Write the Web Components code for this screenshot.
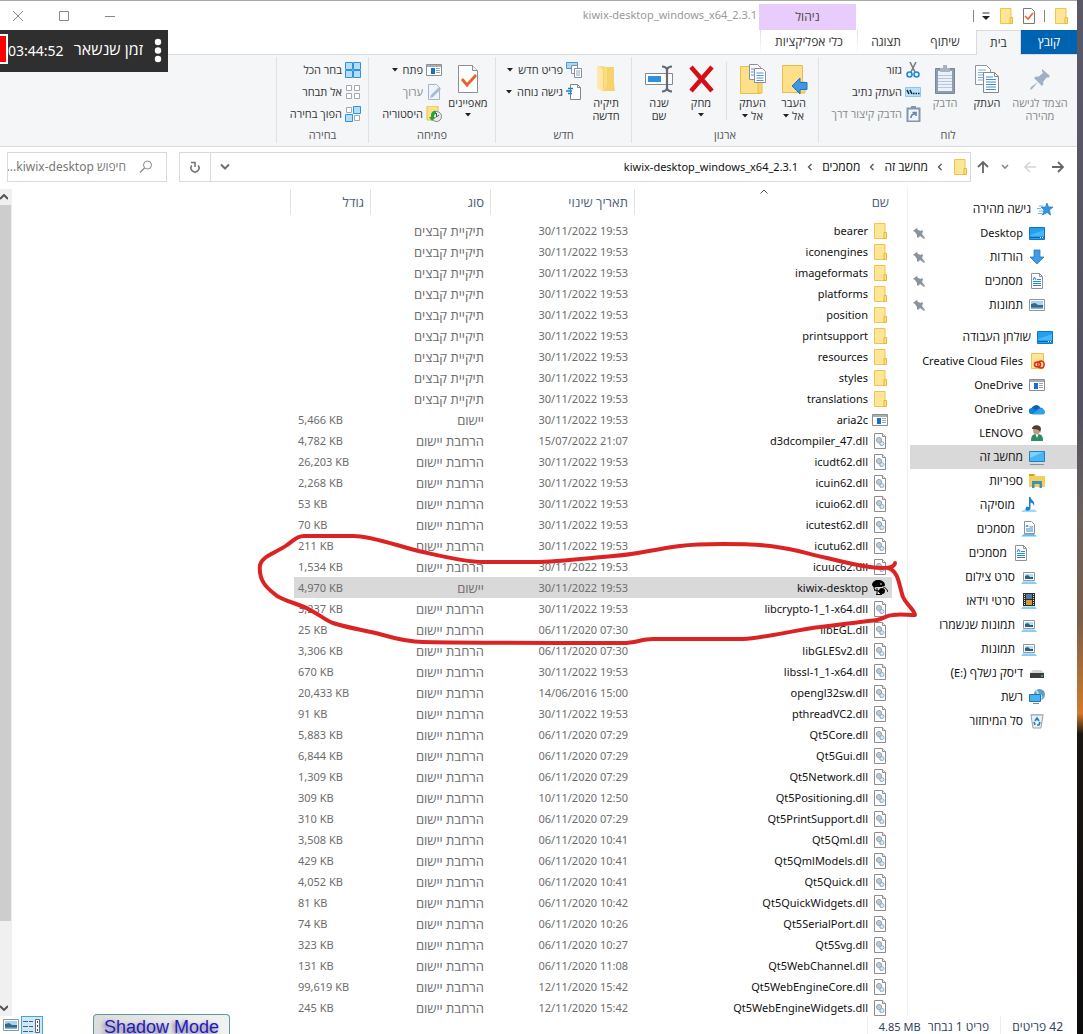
<!DOCTYPE html>
<html lang="he" dir="rtl">
<head>
<meta charset="utf-8">
<title>kiwix-desktop_windows_x64_2.3.1</title>
<style>
html,body{margin:0;height:100%}
body{font:11px/16px "Noto Sans","Open Sans","Liberation Sans",sans-serif;color:#111;background:#fff;overflow:hidden}
</style>
</head>
<body>
<explorer-window></explorer-window>
<script>
const ICONS = {
folder:[16,16,'<path d="M2.500.5h10.500v15H2.500z" fill="#ffe596" stroke="#ecc54e"/><path d="M12 9.500h2.500v6H12z" fill="#ffdf80" stroke="#e3b83c"/>'],
app:[16,14,'<path d="M.5 1.500h15v11H.5z" fill="#fff" stroke="#8b8f94"/><path d="M1 2h14v2H1z" fill="#a9adb2"/><path d="M5 5h4v6H5z" fill="#1272c8"/><path d="M10 5.500h4M10 7.500h4M10 9.500h4" stroke="#9aa3ad"/>'],
dll:[16,16,'<path d="M2.500.5h8l3 3v12h-11z" fill="#fff" stroke="#8d8d8d"/><path d="M10.500.5v3h3" fill="#eee" stroke="#8d8d8d"/><circle cx="7" cy="7" r="2.500" fill="#d8e2e9" stroke="#8797a4"/><circle cx="7" cy="7" r="1" fill="#fff" stroke="#8797a4" stroke-width=".6"/><circle cx="10" cy="10.500" r="2" fill="#dbeaf3" stroke="#96b2c6"/><path d="M6 9l3 4" stroke="#9fb7c8"/>'],
kiwix:[16,16,'<path d="M0 5C0 2 3 0 6 0c4 0 7 2 7 5 0 1-1 1-2 1l-1 1H4L2 8z" fill="#000"/><circle cx="10" cy="11" r="3" fill="#000"/><path d="M2 8l1 3M3 10l4 1M5 8v6M4 14.500h4M6 11l4 3.500H7" stroke="#000" fill="none"/><path d="M11 7c2 0 4 2 5 5" stroke="#000" fill="none"/><circle cx="9" cy="4" r=".8" fill="#fff"/>'],
star:[16,16,'<path d="M10 2l1.500 4H16l-3.500 3 1 5L10 11.500 5.500 14 7 9 4 6h4.500z" fill="#2e96e6" stroke="#1c78c4" stroke-width=".7"/><path d="M2 5h4M0 7.500h4M2 10h4M1 12.500h4" stroke="#6db9ef"/>'],
desktop:[16,13,'<path d="M.5.5h15v12H.5z" fill="#23a0f0" stroke="#1474c0"/><path d="M1 8L15 3v6H1z" fill="#45b8fa"/><path d="M1 10.500h14" stroke="#1167a8"/><path d="M11 10.500h1m1 0h1" stroke="#fff"/>'],
down:[16,16,'<path d="M5 1h6v7h4l-7 7-7-7h4z" fill="#3f9be8" stroke="#2777bd" stroke-width=".8"/>'],
doc:[16,16,'<path d="M2.500.5h8l3 3v12h-11z" fill="#fff" stroke="#8c9299"/><path d="M10.500.5v3h3" fill="none" stroke="#8c9299"/><path d="M4 7l1.500-3L7 7M4 10.500h8M4 12.500h8M8 6.500h4M4 8.500h8" stroke="#2e8ad0" fill="none"/>'],
image:[16,12,'<path d="M.5.5h15v11H.5z" fill="#fff" stroke="#8f979e"/><path d="M2 2h12v8H2z" fill="#a9d4f1"/><path d="M2 5l4-1 3 2 5 0v4H2z" fill="#34698c"/><path d="M2 8.500h12V10H2z" fill="#7db7dc"/>'],
cc:[16,16,'<path d="M2.500.5h12v15h-12z" fill="#ffe596" stroke="#ecc54e"/><ellipse cx="8.500" cy="11.500" rx="3" ry="2.500" fill="none" stroke="#e0261b" stroke-width="1.500"/><ellipse cx="12" cy="11.500" rx="3.200" ry="3.500" fill="none" stroke="#e0261b" stroke-width="1.500"/>'],
cloud:[16,11,'<path d="M3 10a3 3 0 0 1-.5-6A5 5 0 0 1 11 3.500 3.500 3.500 0 0 1 13 10z" fill="#1681d2"/><path d="M3 10.500L10 5a4 4 0 0 1 6 3c0 2-1 2.500-3 2.500z" fill="#2fa3ec"/><path d="M5 2a4 4 0 0 1 6 1.500L7 6 3 4z" fill="#0f5fae"/>'],
user:[16,16,'<path d="M2 16c0-6 2-7 6-7s6 1 6 7z" fill="#2f8b62"/><path d="M6 8h4l-2 5z" fill="#fff"/><ellipse cx="7.500" cy="5" rx="3.500" ry="4.500" fill="#c69a7c"/><path d="M3 4c0-5 9-5 9 0l-1 4c0-3-2-4-7-4z" fill="#4b3c35"/>'],
pc:[16,15,'<path d="M.5 1.500h15v10H.5z" fill="#48b5f7" stroke="#2680bb"/><path d="M1 8l13-6H1z" fill="#7fd0ff"/><path d="M1 14.500h14" stroke="#7894a8"/>'],
libs:[16,14,'<path d="M0 2l1-2h5l1 2h9v11H0z" fill="#f6cf5b"/><path d="M0 0h5v2H0z" fill="#caa02d"/><path d="M3 7h10v7h-2.500v-4h-5v4H3z" fill="#3a92bd"/>'],
music:[16,16,'<path d="M3 12.500h11l2 2.500H0z" fill="#a6d8f5"/><path d="M8 0h1.500c0 3 5 4 3.500 8.500-1-2-2-3-3.500-3V11c0 3.500-5 3.500-5 1s2-2.500 3.500-2z" fill="#1681d2"/>'],
docpc:[16,16,'<path d="M3.500.5h7l3 3v9h-10z" fill="#fff" stroke="#8c9299"/><path d="M5 6l1-2 1 2M5 8h7M5 10h7M8.500 6H12" stroke="#2e8ad0" fill="none"/><path d="M3 13h10l3 2.500H0z" fill="#6bbbe9"/>'],
imgpc:[16,14,'<path d="M2.500 2.500h11v8h-11z" fill="#fff" stroke="#8f979e"/><path d="M4 4h8v5H4z" fill="#b9def4"/><path d="M4 6l3-1 2 2h3v2H4z" fill="#28628a"/><path d="M2 11.500h12l2 2.500H0z" fill="#8accef"/>'],
film:[16,16,'<path d="M2 0h12v13H2z" fill="#2b2b2b"/><path d="M5 1h6v5H5z" fill="#5577a8"/><path d="M5 7h6v5H5z" fill="#d29a35"/><path d="M3.500 1v12M12.500 1v12" stroke="#ddd" stroke-dasharray="1 1"/><path d="M2 13.500h12l2 2.500H0z" fill="#8accef"/>'],
drive:[16,12,'<path d="M4 3h8l3 3H1z" fill="#d4d4d4"/><path d="M1 6h14v5H1z" fill="#3a3d3f"/><path d="M12 9h2" stroke="#5ff08a"/>'],
net:[16,16,'<circle cx="10.500" cy="5.500" r="5.500" fill="#5a9fc7"/><path d="M7 2c3 1 1 4 3 4s3 1 2 4" stroke="#bde0ef" fill="none" stroke-width="2"/><path d="M.5 5.500h11v7H.5z" fill="#44b2f4" stroke="#2574a8"/><path d="M4 14.500h6" stroke="#6d8ca0"/>'],
bin:[16,16,'<path d="M2 2h12l-2 13H4z" fill="#eef1f3" stroke="#9aa2a8"/><path d="M1.500 1.500h13" stroke="#aeb5ba"/><path d="M6 8l2-3 2 3M11 9l-1 3H8M5 9l1 3" stroke="#1f7fc9" stroke-width="1.700" fill="none"/>'],
navpin:[12,12,'<path d="M1 3l3-2 1 2 3 1 1-1 1 1-1 3 3 4-1 1-4-3-2 2-1-1 0-2-2-3-2-1z" fill="#8b949c"/>'],
bigpin:[22,22,'<path d="M13 1l8 7-2 2-1-1-4 5c1 2 0 3-1 4l-4-4-6 7-2 1 1-3 7-5-4-4c1-1 3-2 4-1l5-4-1-2z" fill="#9fb0c6"/>'],
copy:[26,30,'<path d="M1.500 1.500h11l4 4v15h-15z" fill="#fff" stroke="#8c96a2"/><path d="M4 6h8M4 8.500h10M4 11h10M4 13.500h10M4 16h10" stroke="#73aee0"/><path d="M9.500 8.500h11l4 4v16h-15z" fill="#fff" stroke="#7f8994"/><path d="M20.500 8.500v4h4" fill="none" stroke="#7f8994"/><path d="M12 13h7M12 15.500h10M12 18h10M12 20.500h10M12 23h10M12 25.500h10" stroke="#3f8ad4"/>'],
paste:[22,30,'<path d="M1.500 4.500h19v25h-19z" fill="#8e9db1" stroke="#75869d"/><path d="M4 7h14v20H4z" fill="#eaf1fa"/><path d="M4 11.500h14M4 14.500h14M4 17.500h14M4 20.500h14M4 23.500h14" stroke="#b7c6d9"/><path d="M6 4h3V1h4v3h3v4H6z" fill="#a8b3c0"/>'],
moveto:[28,30,'<path d="M2.500 1.500h20v27h-20z" fill="#ffe08a" stroke="#e6be4e"/><path d="M20 18h5v11h-5z" fill="#ffd56b" stroke="#e6be4e"/><path d="M27 18.500h-7V14l-8 8 8 8v-4.500h7z" fill="#3e97e6" stroke="#2472b8"/>'],
copyto:[28,30,'<path d="M1.500 2.500h20v27h-20z" fill="#ffe08a" stroke="#e6be4e"/><path d="M19 18h4v11h-4z" fill="#ffd56b" stroke="#e6be4e"/><path d="M10.500.5h8l3 3v12h-11z" fill="#fff" stroke="#8790a0"/><path d="M15.500 4.500h8l3 3v11h-11z" fill="#fff" stroke="#8790a0"/><path d="M12 5h3M12 8h3M12 11h3M17.500 9h7M17.500 11.500h7M17.500 14h7M17.500 16.500h7" stroke="#4f96dc"/>'],
del:[26,28,'<path d="M3 2l21 24M24 2L3 26" stroke="#d60f17" stroke-width="4.500"/>'],
rename:[28,28,'<path d="M.5 8.500h27v11H.5z" fill="#fff" stroke="#7f8b96"/><path d="M3 11h13v6H3z" fill="#2f8fe0"/><path d="M17 1.500q4 0 5 3 1-3 5-3M22 3v22M17 26.500q4 0 5-3 1 3 5 3" stroke="#626a72" stroke-width="2.200" fill="none"/>'],
newfolder:[20,28,'<path d="M5 2h13v16l1 8H5z" fill="#f6d36d"/><path d="M1 1h8l2 3v16l-3 7V5z" fill="#f9dc84"/><path d="M1 1l6 4v22l-6-4z" fill="#ffe9a8"/>'],
props:[22,30,'<path d="M1.500 1.500h14l5 5v22h-19z" fill="#fff" stroke="#8b8f94"/><path d="M15.500 1.500v5h5" fill="#eee" stroke="#8b8f94"/><path d="M5 15l5 6 9-10" fill="none" stroke="#e8622c" stroke-width="2.800"/>'],
cut:[16,16,'<path d="M5 0l5 10M11 0L6 10" stroke="#777f87" stroke-width="1.600"/><circle cx="4.500" cy="12.500" r="2.500" fill="none" stroke="#1d89d8" stroke-width="1.600"/><circle cx="11.500" cy="12.500" r="2.500" fill="none" stroke="#1d89d8" stroke-width="1.600"/>'],
path:[16,10,'<path d="M.5.5h15v9H.5z" fill="#b9e0fa" stroke="#90c6ea"/><path d="M2 3l2 4M5 3l2 4" stroke="#123"  stroke-width="1.500"/><path d="M8 6.500h1.500m1 0H12m1 0h1.500" stroke="#123" stroke-width="1.500"/>'],
shortcut:[16,16,'<path d="M2.500 2.500h12v13h-12z" fill="#f3f7fc" stroke="#8496ad" stroke-width="2"/><path d="M6 0h5v3H6z" fill="#8496ad"/><path d="M6 12c0-3 1-4 4-4M7.500 6.500H11V10" fill="none" stroke="#6980a0" stroke-width="1.600"/>'],
newitem:[16,16,'<path d="M.5.5h11v6H.5z" fill="#a8d5f5" stroke="#4e96c8"/><path d="M5.500 3.500h6v8h-6z" fill="#fff" stroke="#8790a0"/><path d="M8.500 6.500h7v9h-7z" fill="#fff" stroke="#8790a0"/><path d="M10 9h4M10 11h4M10 13h4" stroke="#8aa"/>'],
easy:[16,16,'<path d="M4.500.5h7l3 3v12h-10z" fill="#fff" stroke="#7f8790"/><path d="M11.500.5v3h3" fill="none" stroke="#7f8790"/><path d="M2 4.500h5M0 7h6M2 9.500h4" stroke="#1d7fd0" stroke-width="1.500"/>'],
edit:[16,16,'<path d="M2.500.5h8l3 3v12h-11z" fill="#eef4fb" stroke="#a5b6cc"/><path d="M15 5l-8 8-3 1 1-3 8-8z" fill="#a7bad3"/>'],
history:[16,16,'<path d="M1 0h11v14H1z" fill="#fbe18a" stroke="#e5c052"/><circle cx="10.500" cy="10.500" r="5" fill="#e7eaec" stroke="#84898d"/><path d="M10.500 7v4l2.500-2" stroke="#555" fill="none"/><path d="M5 9c0-3 3-5 5-4v3c-2 0-2 2-2 3h2l-4 4-3-4h2z" fill="#25a43a"/>'],
selall:[16,16,'<path d="M.5.5h7v7h-7zM8.500.5h7v7h-7zM.5 8.500h7v7h-7zM8.500 8.500h7v7h-7z" fill="#b4ddfa" stroke="#3391d8"/>'],
selnone:[16,16,'<path d="M1.500 1.500h5v5h-5zM9.500 1.500h5v5h-5zM1.500 9.500h5v5h-5zM9.500 9.500h5v5h-5z" fill="#fff" stroke="#a4a9ae"/>'],
selinv:[16,16,'<path d="M1.500 1.500h5v5h-5zM9.500 9.500h5v5h-5z" fill="#fff" stroke="#a4a9ae"/><path d="M8.500.5h7v7h-7zM.5 8.500h7v7h-7z" fill="#b4ddfa" stroke="#3391d8"/>'],
check:[14,16,'<path d="M1.500.5h8l3 3v12h-11z" fill="#fff" stroke="#777"/><path d="M3 8l3 3 5-6" fill="none" stroke="#e8622c" stroke-width="1.600"/>'],
qat:[8,8,'<path d="M.5 1h7" stroke="#333"/><path d="M0 4h8L4 8z" fill="#222"/>'],
close:[12,12,'<path d="M1 1l10 10M11 1L1 11" stroke="#888"/>'],
max:[12,12,'<path d="M1.500 1.500h9v9h-9z" fill="none" stroke="#888"/>'],
min:[12,12,'<path d="M1 6.500h10" stroke="#888"/>'],
fwd:[14,12,'<path d="M1 6h11M7 1l5 5-5 5" fill="none" stroke="#666" stroke-width="1.800"/>'],
back:[14,12,'<path d="M13 6H2M7 1L2 6l5 5" fill="none" stroke="#d4d4d4" stroke-width="1.500"/>'],
up:[12,14,'<path d="M6 13V2M1 7l5-5 5 5" fill="none" stroke="#666" stroke-width="1.800"/>'],
chev:[8,6,'<path d="M1 1l3 3 3-3" fill="none" stroke="#888" stroke-width="1.600"/>'],
chevbig:[12,8,'<path d="M2 1.500l4 4 4-4" fill="none" stroke="#707070" stroke-width="2"/>'],
crumb:[6,8,'<path d="M4.500 1L1.500 4l3 3" fill="none" stroke="#555" stroke-width="1.300"/>'],
sort:[8,5,'<path d="M.5 4.500L4 1l3.500 3.500" fill="none" stroke="#555"/>'],
refresh:[12,12,'<path d="M2.800 4.500A4 4 0 1 0 9.200 4.500M2 1.500H6V6" fill="none" stroke="#777" stroke-width="1.600"/>'],
search:[14,14,'<circle cx="8.500" cy="5" r="4" fill="none" stroke="#8a8a8a"/><path d="M5.500 8L1 12.500" stroke="#8a8a8a" stroke-width="1.300"/>'],
arrUp:[8,6,'<path d="M0 5l4-4 4 4" fill="none" stroke="#555" stroke-width="2"/>'],
arrDn:[8,6,'<path d="M0 1l4 4 4-4" fill="none" stroke="#555" stroke-width="2"/>'],
details:[18,14,'<path d="M0 2.500h5m1 0h4M0 7.500h5m1 0h4M0 12.500h5m1 0h4" stroke="#4b6070"/><path d="M12.500.5h4v13h-4z" fill="#fff" stroke="#667"/><path d="M14 3h1M14 7h1M14 11h1" stroke="#456" stroke-width="2"/>'],
caret:[6,4,'<path d="M0 0h6L3 3.500z" fill="#222"/>'],
dots:[8,26,'<g fill="#fff"><circle cx="4" cy="4" r="3.200"/><circle cx="4" cy="12.500" r="3.200"/><circle cx="4" cy="21" r="3.200"/></g>']
};

const define = (tag, css, html, setup) => {
  const tpl = document.createElement('template');
  tpl.innerHTML = `<style>*{box-sizing:border-box}button{font:inherit;color:inherit;background:none;border:0;padding:0;margin:0}a{color:inherit;text-decoration:none}${css}</style>${html}`;
  customElements.define(tag, class extends HTMLElement {
    connectedCallback() {
      if (this.shadowRoot) return;
      const root = this.attachShadow({ mode: 'open' });
      root.append(tpl.content.cloneNode(true));
      if (setup) setup(this, root);
    }
  });
};
const icon = n => `<ui-icon name="${n}"></ui-icon>`;

define('ui-icon', ':host{display:inline-flex;flex:none}svg{display:block}', '', (el, root) => {
  const [w, h, body] = ICONS[el.getAttribute('name')];
  root.innerHTML += `<svg width="${w}" height="${h}" viewBox="0 0 ${w} ${h}" aria-hidden="true">${body}</svg>`;
});

define('title-bar', `
:host{display:flex;height:30px;flex:none;border-top:1px solid #a8a8a8;background:#fff}
.quick{display:flex;align-items:center;gap:8px;padding-right:8px;width:221px;flex:none}
.quick i{width:1px;height:12px;background:#888}
.ctx{width:97px;margin-top:3px;background:#e8ccfb;display:flex;align-items:center;justify-content:center;font-size:12px;color:#444}
.title{color:#999;padding:6px 2px 0;direction:ltr}
.controls{margin-right:auto;display:flex;direction:ltr}
.controls button{width:46px;display:flex;align-items:center;padding-left:12px}
`, `<div class="quick">${icon('folder')}<i></i>${icon('check')}${icon('folder')}${icon('qat')}<i></i></div>
<div class="ctx">ניהול</div><div class="title">kiwix-desktop_windows_x64_2.3.1</div>
<div class="controls"><button aria-label="סגור">${icon('close')}</button><button aria-label="הגדל">${icon('max')}</button><button aria-label="מזער">${icon('min')}</button></div>`);

define('ribbon-tabs', `
:host{display:flex;height:25px;flex:none;border-bottom:1px solid #dadbdc;font-size:12px;color:#333}
button{display:flex;align-items:center;justify-content:center;height:24px}
.file{width:56px;background:#0063b1;color:#fff}
.home{width:45px;height:25px;background:#f4f6f8;border:1px solid #dadbdc;border-bottom:0}
.share{width:62px}.view{width:56px}
.tools{width:98px;border:1px solid;border-width:0 1px;border-image:linear-gradient(#ddd,#fff) 1}
`, `<button class="file">קובץ</button><button class="home">בית</button><button class="share">שיתוף</button><button class="view">תצוגה</button><button class="tools">כלי אפליקציות</button>`);

define('ribbon-group', `
:host{display:flex;flex-direction:column;height:86px;border-left:1px solid #e0e2e4;flex:none}
.items{display:flex;height:72px;padding-top:5px}
.label{text-align:center;color:#555;line-height:16px}
`, `<div class="items"><slot></slot></div><div class="label"></div>`, (el, root) => {
  root.querySelector('.label').textContent = el.getAttribute('label');
});

define('big-button', `
:host{display:block;flex:none}
button{width:100%;display:flex;flex-direction:column;align-items:center;line-height:13px;color:#333}
:host([off]) button{color:#888}
.pic{height:34px;display:flex;align-items:center;justify-content:center}
.second{display:flex;align-items:center;gap:3px;min-height:12px}
`, `<button><span class="pic"></span><span class="first"></span><span class="second"></span></button>`, (el, root) => {
  root.querySelector('.pic').innerHTML = icon(el.getAttribute('icon'));
  root.querySelector('.first').textContent = el.getAttribute('label');
  root.querySelector('.second').innerHTML = `${el.getAttribute('more') || ''}${el.hasAttribute('menu') ? icon('caret') : ''}`;
});

define('small-button', `
:host{display:block}
button{display:flex;align-items:center;gap:3px;height:22px;color:#333;white-space:nowrap}
:host([off]) button{color:#888}
.menu{margin-right:2px;display:flex}
`, `<button><span class="pic"></span><span><slot></slot></span><span class="menu"></span></button>`, (el, root) => {
  const pic = root.querySelector('.pic');
  pic.style.display = 'flex';
  pic.innerHTML = icon(el.getAttribute('icon'));
  if (el.hasAttribute('menu')) root.querySelector('.menu').innerHTML = icon('caret');
});

define('ribbon-bar', `
:host{display:flex;height:92px;flex:none;padding-top:2px;background:#f4f6f8;border-bottom:1px solid #dadbdc}
.clip{width:259px}.org{width:187px}.new{width:136px}.open{width:127px}.sel{width:92px}
.stack{display:flex;flex-direction:column;margin-top:-3px}
.rule{width:1px;height:58px;background:#dcdfe2;margin:0 5px}
`, `<ribbon-group class="clip" label="לוח">
<big-button style="width:60px;margin-right:7px" off icon="bigpin" label="הצמד לגישה" more="מהירה"></big-button>
<big-button style="width:46px" icon="copy" label="העתק"></big-button>
<big-button style="width:38px" off icon="paste" label="הדבק"></big-button>
<div class="stack" style="margin-right:5px"><small-button icon="cut">גזור</small-button><small-button icon="path">העתק נתיב</small-button><small-button off icon="shortcut">הדבק קיצור דרך</small-button></div>
</ribbon-group>
<ribbon-group class="org" label="ארגון">
<big-button style="width:41px;margin-right:4px" icon="moveto" label="העבר" more="אל" menu></big-button>
<big-button style="width:41px" icon="copyto" label="העתק" more="אל" menu></big-button>
<div class="rule"></div>
<big-button style="width:40px" icon="del" label="מחק" menu></big-button>
<big-button style="width:44px" icon="rename" label="שנה" more="שם"></big-button>
</ribbon-group>
<ribbon-group class="new" label="חדש">
<big-button style="width:38px;margin-right:6px" icon="newfolder" label="תיקיה" more="חדשה"></big-button>
<div class="stack" style="margin-right:5px"><small-button icon="newitem" menu>פריט חדש</small-button><small-button icon="easy" menu>גישה נוחה</small-button></div>
</ribbon-group>
<ribbon-group class="open" label="פתיחה">
<big-button style="width:46px;margin-right:4px" icon="props" label="מאפיינים" menu></big-button>
<div class="stack" style="margin-right:3px"><small-button icon="app" menu>פתח</small-button><small-button off icon="edit">ערוך</small-button><small-button icon="history">היסטוריה</small-button></div>
</ribbon-group>
<ribbon-group class="sel" label="בחירה">
<div class="stack" style="margin-right:7px"><small-button icon="selall">בחר הכל</small-button><small-button icon="selnone">אל תבחר</small-button><small-button icon="selinv">הפוך בחירה</small-button></div>
</ribbon-group>`);

define('address-bar', `
:host{display:flex;height:40px;flex:none;align-items:center;padding:0 12px 0 7px}
.nav{display:flex;align-items:center;gap:14px;width:94px}
.nav button,.box button{display:flex;align-items:center;justify-content:center}
.nav button:nth-child(3){margin:0 0 0 -2px}
.box{display:flex;flex:1;height:30px;border:1px solid #d9d9d9;align-items:center}
.crumbs{display:flex;align-items:center;gap:8px;padding-right:2px;color:#111;font-size:12px}
.crumbs a[dir=ltr]{font-size:11px}
.crumbs ui-icon[name=crumb]{margin:0 1px}
.drop{width:28px;margin-right:auto;height:28px}
.ref{width:31px;height:28px;border-right:1px solid #d9d9d9!important}
.search{display:flex;align-items:center;width:160px;height:30px;border:1px solid #d9d9d9;margin-right:12px;padding-right:13px;gap:13px}
input{flex:1;min-width:0;border:0;outline:0;padding:0;font:inherit;font-size:12px;background:none}
input::placeholder{color:#777;opacity:1}
`, `<div class="nav"><button aria-label="קדימה">${icon('fwd')}</button><button aria-label="אחורה">${icon('back')}</button><button aria-label="אחרונים">${icon('chev')}</button><button aria-label="למעלה">${icon('up')}</button></div>
<div class="box"><div class="crumbs">${icon('folder')}${icon('crumb')}<a href="#">מחשב זה</a>${icon('crumb')}<a href="#">מסמכים</a>${icon('crumb')}<a href="#" dir="ltr">kiwix-desktop_windows_x64_2.3.1</a></div>
<button class="drop" aria-label="היסטוריה">${icon('chevbig')}</button><button class="ref" aria-label="רענן">${icon('refresh')}</button></div>
<label class="search">${icon('search')}<input type="text" aria-label="חיפוש" placeholder="חיפוש kiwix-desktop..."></label>`);

define('nav-pane', `
:host{display:block;width:170px;flex:none;border-left:1px solid #f0f0f0;padding-top:10px}
nav{display:flex;flex-direction:column;padding-left:2px;font-size:12px}
nav [dir=ltr]{font-size:11px}
a{display:flex;align-items:center;gap:6px;height:24px;white-space:nowrap}
a .pic{width:16px;display:flex;justify-content:center}
.l0{padding-right:24px}.l1{padding-right:32px}.l2{padding-right:40px}.l3{padding-right:48px}
.gap{margin-top:8px}.on{background:#d9d9d9}
.pin{margin-right:auto;padding-left:3px;display:flex}
`, '<nav></nav>', (el, root) => {
  const items = [['star','גישה מהירה',0],['desktop','Desktop',1,'p'],['down','הורדות',1,'p'],['doc','מסמכים',1,'p'],['image','תמונות',1,'p'],['desktop','שולחן העבודה',0,'g'],['cc','Creative Cloud Files',1],['app','OneDrive',1],['cloud','OneDrive',1],['user','LENOVO',1],['pc','מחשב זה',1,'s'],['libs','ספריות',1],['music','מוסיקה',2],['docpc','מסמכים',2],['doc','מסמכים',3],['imgpc','סרט צילום',2],['film','סרטי וידאו',2],['imgpc','תמונות שנשמרו',2],['imgpc','תמונות',2],['drive','דיסק נשלף (<bdi dir="ltr">E:</bdi>)',1],['net','רשת',1],['bin','סל המיחזור',1]];
  root.querySelector('nav').innerHTML = items.map(([i, t, l, f]) => `<a href="#" class="l${l}${f === 'g' ? ' gap' : f === 's' ? ' on' : ''}"><span class="pic">${icon(i)}</span><span dir="${/^[A-Z]/.test(t) ? 'ltr' : 'rtl'}">${t}</span>${f === 'p' ? `<span class="pin">${icon('navpin')}</span>` : ''}</a>`).join('');
});

define('file-list', `
:host{display:block;flex:1;min-width:0;padding:2px 15px 0 0;overflow:hidden}
table{border-collapse:separate;border-spacing:0;table-layout:fixed;width:602px}
col.name{width:258px}col.date{width:144px}col.type{width:120px}col.size{width:76px}col.end{width:4px}
th{height:26px;padding:0 6px 0 0;text-align:right;font-weight:400;font-size:13px;color:#4c607a;border-left:1px solid #e2e2e2}
th:first-child{padding-right:3px;position:relative}
th:nth-child(4){border-left:0}th:last-child{padding:0}
.sort{position:absolute;top:0;left:0;right:0;display:flex;justify-content:center;line-height:0}
tbody::before{content:"";display:block;height:5px}
td{height:21px;padding:0 6px 0 0;color:#6d6d6d;white-space:nowrap}
td.t{font-size:13px}
td.n{color:#111;padding-right:4px}
td.n div{display:flex;align-items:center;gap:4px;height:21px}
td.s{padding:0 0 0 4px;text-align:left;direction:ltr}
td.d{direction:ltr;text-align:right}
.on td{background:#d9d9d9}
`, `<table><colgroup><col class="name"><col class="date"><col class="type"><col class="size"><col class="end"></colgroup>
<thead><tr><th>שם<span class="sort">${icon('sort')}</span></th><th>תאריך שינוי</th><th>סוג</th><th>גודל</th><th></th></tr></thead><tbody></tbody></table>`, (el, root) => {
  const A = '30/11/2022 19:53', B = '06/11/2020 ';
  const rows = ['bearer','iconengines','imageformats','platforms','position','printsupport','resources','styles','translations'].map(n => [n, A, 'תיקיית קבצים', '', 'folder'])
  .concat([['aria2c',A,'יישום','5,466','app']], [
  ['d3dcompiler_47','15/07/2022 21:07','4,782'],['icudt62',A,'26,203'],['icuin62',A,'2,268'],['icuio62',A,'53'],['icutest62',A,'70'],['icutu62',A,'211'],['icuuc62',A,'1,534'],['kiwix-desktop',A,'4,970'],['libcrypto-1_1-x64',A,'3,237'],['libEGL',B+'07:30','25'],['libGLESv2',B+'07:30','3,306'],['libssl-1_1-x64',A,'670'],['opengl32sw','14/06/2016 15:00','20,433'],['pthreadVC2',A,'91'],['Qt5Core',B+'07:29','5,883'],['Qt5Gui',B+'07:29','6,844'],['Qt5Network',B+'07:29','1,309'],['Qt5Positioning','10/11/2020 12:50','309'],['Qt5PrintSupport',B+'07:29','310'],['Qt5Qml',B+'10:41','3,508'],['Qt5QmlModels',B+'10:41','429'],['Qt5Quick',B+'10:41','4,052'],['Qt5QuickWidgets',B+'10:42','81'],['Qt5SerialPort',B+'10:26','74'],['Qt5Svg',B+'10:27','323'],['Qt5WebChannel',B+'11:08','131'],['Qt5WebEngineCore','12/11/2020 15:42','99,619'],['Qt5WebEngineWidgets','12/11/2020 15:42','245']
  ].map(([n, d, s]) => n === 'kiwix-desktop' ? [n, d, 'יישום', s, 'kiwix', 1] : [n + '.dll', d, 'הרחבת יישום', s, 'dll']));
  root.querySelector('tbody').innerHTML = rows.map(([n, d, t, s, i, on]) => `<tr${on ? ' class="on"' : ''}><td class="n"><div>${icon(i)}<span dir="ltr">${n}</span></div></td><td class="d">${d}</td><td class="t">${t}</td><td class="s">${s ? s + ' KB' : ''}</td></tr>`).join('');
});

define('scroll-bar', `
:host{display:flex;flex-direction:column;width:12px;flex:none;background:#f0f0f0;margin-top:2px}
span{height:16px;flex:none;display:flex;align-items:center;justify-content:flex-end}
.track{flex:1;display:flex;flex-direction:column;align-items:flex-end}
.thumb{height:90%;width:11px;background:#cdcdcd}
`, `<span>${icon('arrUp')}</span><div class="track"><div class="thumb"></div></div><span>${icon('arrDn')}</span>`);

define('status-bar', `
:host{display:flex;height:18px;flex:none;align-items:center;color:#2c4264;background:#fff;padding-right:14px;white-space:nowrap;font-size:12px;line-height:14px}
.item{display:flex;gap:7px;padding:4px 0 0 11px;height:18px;border-left:1px solid #eee;margin-left:11px}
.item [dir=ltr]{font-size:11px}
.views{margin-right:auto;display:flex;direction:ltr;height:18px}
.views button{width:21px;height:18px;display:flex;align-items:center;justify-content:center;overflow:hidden}
.views .on{background:#cde8f8;border:1px solid #4aa3d8;border-bottom:0;width:22px}
`, `<span class="item">42 פריטים</span><span class="item"><span>פריט 1 נבחר</span><span dir="ltr">4.85 MB</span></span>
<div class="views"><button aria-label="תמונות ממוזערות">${icon('image')}</button><button class="on" aria-label="פרטים">${icon('details')}</button></div>`);

define('time-widget', `
:host{position:absolute;left:0;top:30px;width:168px;height:42px;background:#2f2f2f;color:#fff;display:flex;direction:ltr;align-items:center;font-size:14px;line-height:20px}
.rec{width:8px;height:30px;background:#f00;border:2px solid #fff;border-left:0;margin-top:-4px}
.label{margin-left:auto;margin-right:11px;font-size:16px;margin-top:-4px}
ui-icon{margin-right:6px;margin-top:-1px}
`, `<span class="rec"></span><span>03:44:52</span><span class="label" dir="rtl">זמן שנשאר</span>${icon('dots')}`);

define('shadow-mode', `
:host{position:absolute;left:93px;bottom:0;width:137px;height:20px}
button{width:100%;height:20px;padding-top:3px;border:1px solid #5f9a9a;border-bottom:0;border-radius:4px 4px 0 0;background:linear-gradient(90deg,#ddd,#f2f2f2);font:18px/18px "Liberation Sans",sans-serif;color:#2418c8;text-shadow:-2px 2px 4px #666;white-space:nowrap}
`, `<button dir="ltr">Shadow Mode</button>`);

define('red-mark', `
:host{position:absolute;left:250px;top:530px;width:680px;height:120px;pointer-events:none}svg{display:block}
`, `<svg width="680" height="120" viewBox="250 530 680 120" aria-hidden="true"><path d="M895 563C895 568 884 569 870 567C855 565 843 562 827 558C805 553 793 549 777 547C760 544 742 544 723 544C708 544 695 544 680 546C655 549 635 555 613 556C580 559 560 562 533 562H483C465 562 445 557 423 552C400 547 373 536 353 536H304C296 536 293 541 287 545C276 553 262 556 260 565C258 583 270 590 277 596C287 602 300 604 310 610C320 615 327 621 333 623C348 628 364 630 383 635C397 639 410 642 423 642C480 643 540 643 580 643H623C635 643 642 639 653 639H743C765 638 795 630 820 627C840 624 863 622 877 620C884 619 886 615 893 615C900 614 907 615 915 615C913 607 907 606 903 597C899 586 899 571 888 568" fill="none" stroke="#dc2323" stroke-width="4" stroke-linecap="round" stroke-linejoin="round"/></svg>`);

define('explorer-window', `
:host{display:flex;height:100vh;position:relative;overflow:hidden}
.desk{width:6px;flex:none;background:linear-gradient(#5b5968,#54525f 40%,#6b625f 50%,#7b5e4b 60%,#d07a2c 69%,#1b1613 71%,#0c0c0c)}
main{flex:1;min-width:0;display:flex;flex-direction:column}
.body{flex:1;min-height:0;display:flex;overflow:hidden}
`, `<div class="desk"></div><main><title-bar></title-bar><ribbon-tabs></ribbon-tabs><ribbon-bar></ribbon-bar><address-bar></address-bar>
<div class="body"><nav-pane></nav-pane><file-list></file-list><scroll-bar></scroll-bar></div><status-bar></status-bar></main>
<time-widget></time-widget><shadow-mode></shadow-mode><red-mark></red-mark>`);
</script>
</body>
</html>
